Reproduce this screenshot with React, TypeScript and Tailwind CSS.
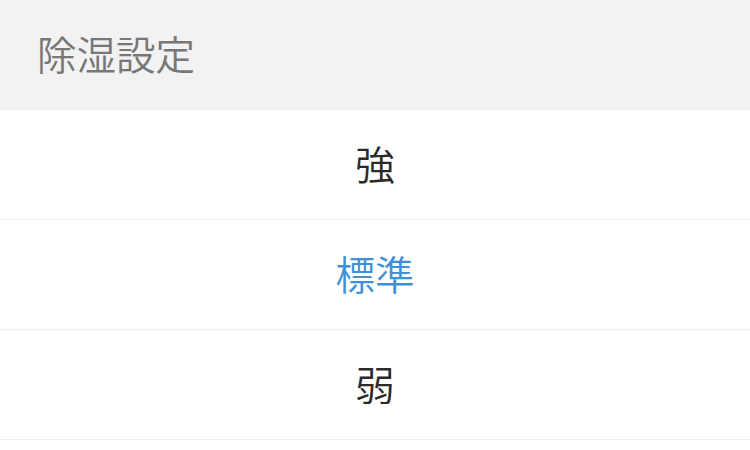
import React from "react";

const font = { fontFamily: '"Noto Sans CJK JP", "Noto Sans", sans-serif' };

export default function App() {
  const items = [
    { label: "強", active: false },
    { label: "標準", active: true },
    { label: "弱", active: false },
  ];
  return (
    <div className="w-[750px] h-[450px] bg-white overflow-hidden" style={font}>
      <div className="h-[110px] bg-[#f2f2f2] flex items-center px-[37px] pb-[3px] border-b border-[#ebebeb]">
        <span className="text-[39.5px] leading-none font-[350] text-[#777777]">除湿設定</span>
      </div>
      {items.map((it) => (
        <div
          key={it.label}
          className="h-[110px] flex items-center justify-center pb-[3px] border-b border-[#eeeeee]"
        >
          <span
            className={
              "text-[39.5px] leading-none font-[350] " +
              (it.active ? "text-[#3f90d6]" : "text-[#2a2a2a]")
            }
          >
            {it.label}
          </span>
        </div>
      ))}
    </div>
  );
}
